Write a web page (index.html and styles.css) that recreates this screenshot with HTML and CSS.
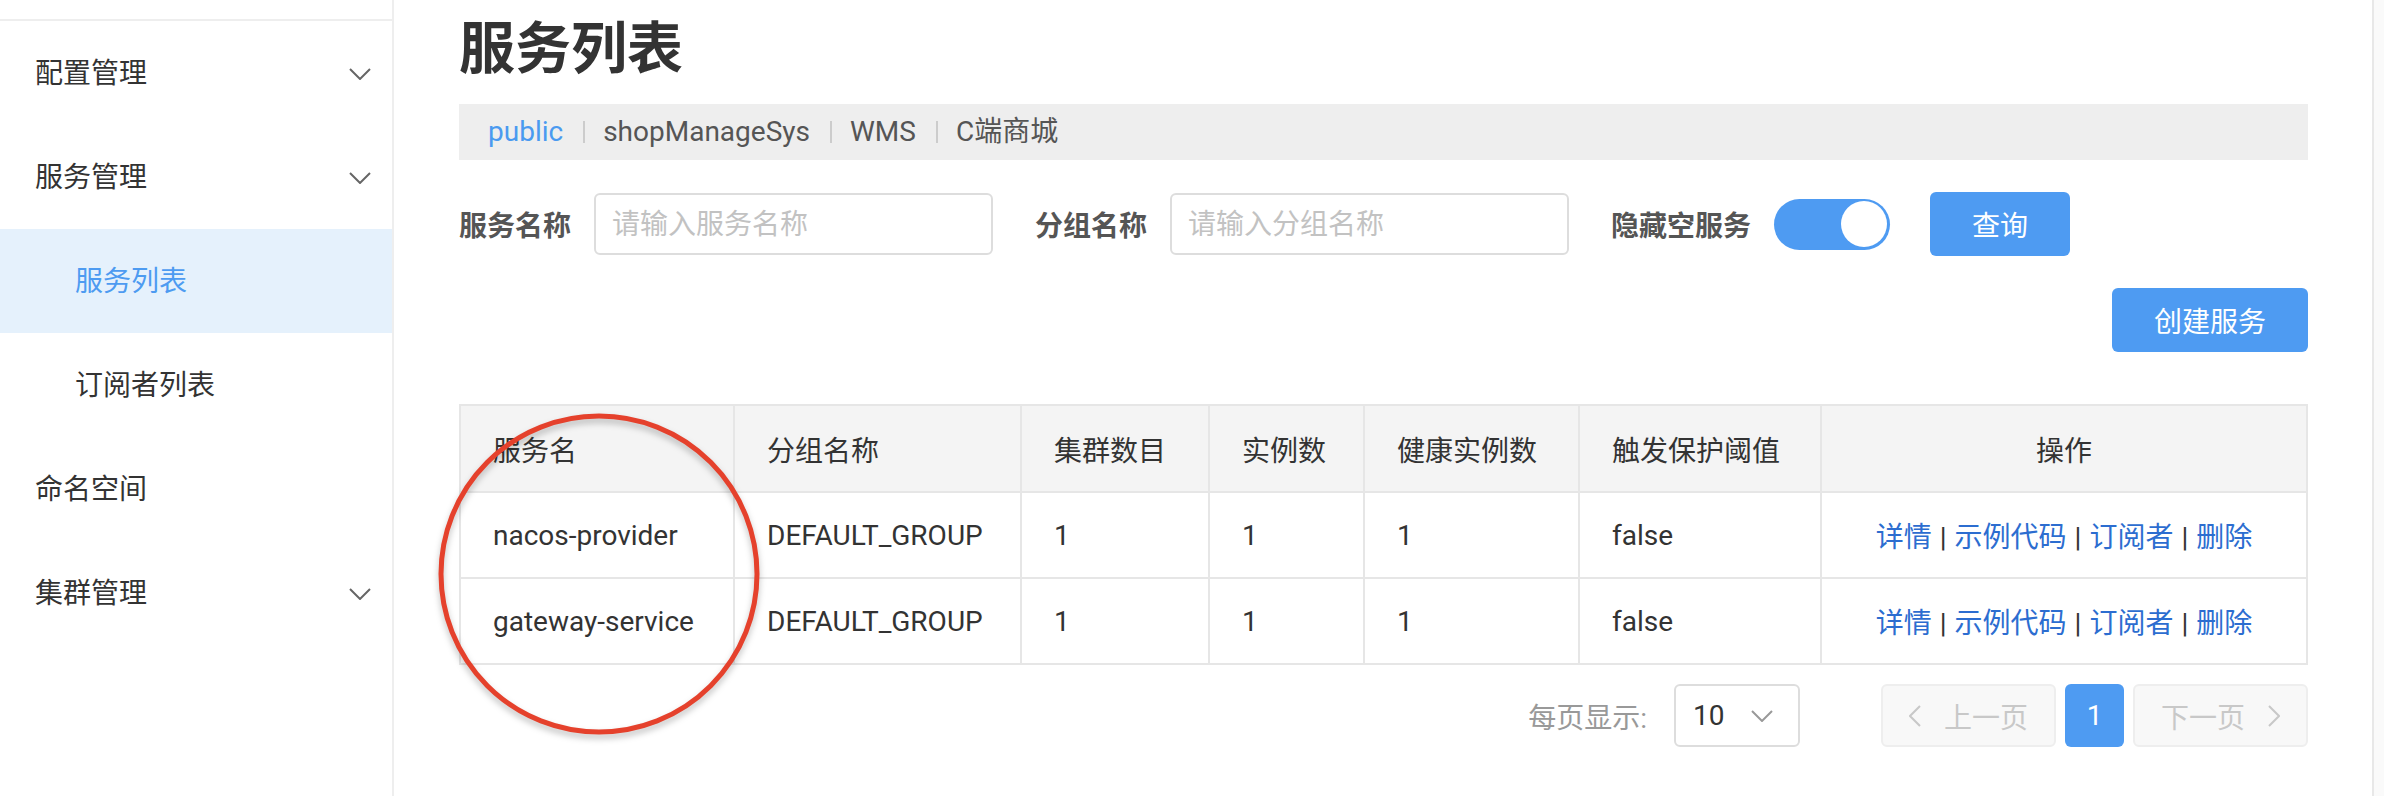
FILE: index.html
```
<!DOCTYPE html>
<html lang="zh-CN">
<head>
    <meta charset="UTF-8">
    <title>服务列表</title>
    <link rel="stylesheet" href="styles.css">
</head>
<body>
    <div class="app">
        <nav class="sidebar">
            <div class="sidebar-head"></div>
            <ul class="menu">
                <li class="menu-item">
                    <span>配置管理</span>
                    <svg class="chev" width="22" height="12" viewBox="0 0 22 12"><polyline points="1,1 11,11 21,1" /></svg>
                </li>
                <li class="menu-item">
                    <span>服务管理</span>
                    <svg class="chev" width="22" height="12" viewBox="0 0 22 12"><polyline points="1,1 11,11 21,1" /></svg>
                </li>
                <li class="menu-item sub active"><span>服务列表</span></li>
                <li class="menu-item sub"><span>订阅者列表</span></li>
                <li class="menu-item"><span>命名空间</span></li>
                <li class="menu-item">
                    <span>集群管理</span>
                    <svg class="chev" width="22" height="12" viewBox="0 0 22 12"><polyline points="1,1 11,11 21,1" /></svg>
                </li>
            </ul>
        </nav>

        <main class="content">
            <h1 class="page-title">服务列表</h1>

            <div class="ns-bar">
                <span class="ns current">public</span>
                <span class="ns-sep"></span>
                <span class="ns">shopManageSys</span>
                <span class="ns-sep"></span>
                <span class="ns">WMS</span>
                <span class="ns-sep"></span>
                <span class="ns">C端商城</span>
            </div>

            <div class="filters">
                <label class="filter-label">服务名称</label>
                <input class="filter-input" type="text" placeholder="请输入服务名称">
                <label class="filter-label">分组名称</label>
                <input class="filter-input" type="text" placeholder="请输入分组名称">
                <label class="filter-label">隐藏空服务</label>
                <div class="switch"><span class="knob"></span></div>
                <button class="btn btn-query">查询</button>
            </div>

            <div class="actions-row">
                <button class="btn btn-create">创建服务</button>
            </div>

            <table class="service-table">
                <colgroup>
                    <col style="width: 274px">
                    <col style="width: 287px">
                    <col style="width: 188px">
                    <col style="width: 155px">
                    <col style="width: 215px">
                    <col style="width: 242px">
                    <col style="width: 486px">
                </colgroup>
                <thead>
                    <tr>
                        <th>服务名</th>
                        <th>分组名称</th>
                        <th>集群数目</th>
                        <th>实例数</th>
                        <th>健康实例数</th>
                        <th>触发保护阈值</th>
                        <th class="center">操作</th>
                    </tr>
                </thead>
                <tbody>
                    <tr>
                        <td>nacos-provider</td>
                        <td>DEFAULT_GROUP</td>
                        <td>1</td>
                        <td>1</td>
                        <td>1</td>
                        <td>false</td>
                        <td class="center ops"><a>详情</a><span class="op-sep">|</span><a>示例代码</a><span class="op-sep">|</span><a>订阅者</a><span class="op-sep">|</span><a>删除</a></td>
                    </tr>
                    <tr>
                        <td>gateway-service</td>
                        <td>DEFAULT_GROUP</td>
                        <td>1</td>
                        <td>1</td>
                        <td>1</td>
                        <td>false</td>
                        <td class="center ops"><a>详情</a><span class="op-sep">|</span><a>示例代码</a><span class="op-sep">|</span><a>订阅者</a><span class="op-sep">|</span><a>删除</a></td>
                    </tr>
                </tbody>
            </table>

            <div class="pager">
                <span class="pager-label">每页显示:</span>
                <div class="page-size">
                    <span>10</span>
                    <svg width="22" height="12" viewBox="0 0 22 12"><polyline points="1,1 11,11 21,1" /></svg>
                </div>
                <button class="page-btn prev">
                    <svg width="12" height="22" viewBox="0 0 12 22"><polyline points="11,1 1,11 11,21" /></svg>
                    <span>上一页</span>
                </button>
                <button class="page-num">1</button>
                <button class="page-btn next">
                    <span>下一页</span>
                    <svg width="12" height="22" viewBox="0 0 12 22"><polyline points="1,1 11,11 1,21" /></svg>
                </button>
            </div>
        </main>

        <div class="scroll-track"></div>

        <!-- red annotation circle drawn over the table -->
        <svg class="mark" width="326" height="330" viewBox="0 0 326 330">
            <circle cx="162" cy="161" r="158" />
        </svg>
    </div>
</body>
</html>
```

FILE: styles.css
```
* {
    box-sizing: border-box;
}

body {
    margin: 0;
    font-family: Roboto, "Noto Sans CJK SC", sans-serif;
    color: #333;
    background: #fff;
}

.app {
    position: relative;
    display: flex;
    width: 2384px;
    height: 796px;
    overflow: hidden;
}

/* sidebar */
.sidebar {
    width: 394px;
    flex-shrink: 0;
    border-right: 2px solid #eee;
}

.sidebar-head {
    height: 21px;
    border-bottom: 2px solid #eee;
}

.menu {
    list-style: none;
    margin: 0;
    padding: 0;
}

.menu-item {
    display: flex;
    align-items: center;
    justify-content: space-between;
    height: 104px;
    padding: 2px 21px 0 35px;
    font-size: 28px;
    line-height: 40px;
    color: #333;
}

.menu-item.sub {
    padding-left: 75px;
}

.menu-item.active {
    background: #e5f1fc;
    color: #4d9bf1;
}

.chev polyline {
    fill: none;
    stroke: #666;
    stroke-width: 2;
}

/* main content */
.content {
    flex: 1;
    padding: 21px 64px 0 65px;
}

.page-title {
    margin: 0;
    font-size: 56px;
    line-height: 56px;
    font-weight: 700;
    color: #333;
}

.ns-bar {
    display: flex;
    align-items: center;
    height: 56px;
    margin-top: 27px;
    padding-left: 29px;
    background: #eee;
    font-size: 28px;
    line-height: 40px;
    color: #555;
}

.ns.current {
    color: #4a9af0;
}

.ns-sep {
    width: 2px;
    height: 22px;
    margin: 0 18px 0 20px;
    background: #ccc;
}

.filters {
    display: flex;
    align-items: center;
    height: 64px;
    margin-top: 32px;
}

.filter-label {
    margin-right: 23px;
    font-size: 28px;
    font-weight: 700;
    color: #555;
    white-space: nowrap;
}

.filter-input {
    width: 399px;
    height: 62px;
    margin-right: 42px;
    padding: 0 16px;
    border: 2px solid #ddd;
    border-radius: 6px;
    font-family: inherit;
    font-size: 28px;
    outline: none;
}

.filter-input::placeholder {
    color: #c2c2c2;
}

.switch {
    display: flex;
    justify-content: flex-end;
    align-items: center;
    width: 116px;
    height: 51px;
    margin-right: 40px;
    padding: 0 3px;
    border-radius: 26px;
    background: #4e9bf2;
}

.knob {
    width: 46px;
    height: 46px;
    border-radius: 50%;
    background: #fff;
}

.btn {
    height: 64px;
    border: none;
    border-radius: 6px;
    background: #4e9bf2;
    color: #fff;
    font-family: inherit;
    font-size: 28px;
    padding: 0;
}

.btn-query {
    width: 140px;
}

.actions-row {
    display: flex;
    justify-content: flex-end;
    margin-top: 32px;
}

.btn-create {
    width: 196px;
}

/* table */
.service-table {
    width: 1847px;
    margin-top: 52px;
    border-collapse: collapse;
    table-layout: fixed;
    font-size: 28px;
    border: 2px solid #e6e6e6;
}

.service-table th,
.service-table td {
    padding: 0 0 0 32px;
    border: 2px solid #e6e6e6;
    text-align: left;
    font-weight: 400;
    color: #333;
    white-space: nowrap;
}

.service-table th {
    height: 87px;
    background: #f4f4f4;
}

.service-table td {
    height: 86px;
}

.service-table .center {
    text-align: center;
    padding-left: 0;
}

.ops a {
    color: #2c6dd0;
}

.op-sep {
    margin: 0 8px;
    color: #333;
}

/* pagination */
.pager {
    display: flex;
    justify-content: flex-end;
    align-items: center;
    height: 63px;
    margin-top: 19px;
}

.pager-label {
    margin-right: 27px;
    font-size: 28px;
    color: #999;
}

.page-size {
    display: flex;
    align-items: center;
    justify-content: space-between;
    width: 126px;
    height: 63px;
    margin-right: 81px;
    padding: 0 25px 0 17px;
    border: 2px solid #ddd;
    border-radius: 6px;
    font-size: 28px;
    color: #333;
}

.page-size polyline {
    fill: none;
    stroke: #999;
    stroke-width: 2;
}

.page-btn {
    display: flex;
    align-items: center;
    justify-content: center;
    gap: 23px;
    width: 175px;
    height: 63px;
    padding: 0;
    border: 2px solid #eee;
    border-radius: 6px;
    background: #f8f8f8;
    color: #c8c8c8;
    font-family: inherit;
    font-size: 28px;
}

.page-btn polyline {
    fill: none;
    stroke: #c8c8c8;
    stroke-width: 2;
}

.page-num {
    width: 59px;
    height: 63px;
    margin: 0 9px;
    padding: 0;
    border: none;
    border-radius: 6px;
    background: #4e9bf2;
    color: #fff;
    font-family: inherit;
    font-size: 28px;
}

.scroll-track {
    width: 14px;
    flex-shrink: 0;
    border-left: 2px solid #e8e8e8;
    background: #fafafa;
}

/* annotation */
.mark {
    position: absolute;
    left: 437px;
    top: 413px;
    overflow: visible;
}

.mark circle {
    fill: none;
    stroke: #e5412c;
    stroke-width: 5;
    filter: drop-shadow(0 4px 3px rgba(0, 0, 0, 0.25));
}
```
